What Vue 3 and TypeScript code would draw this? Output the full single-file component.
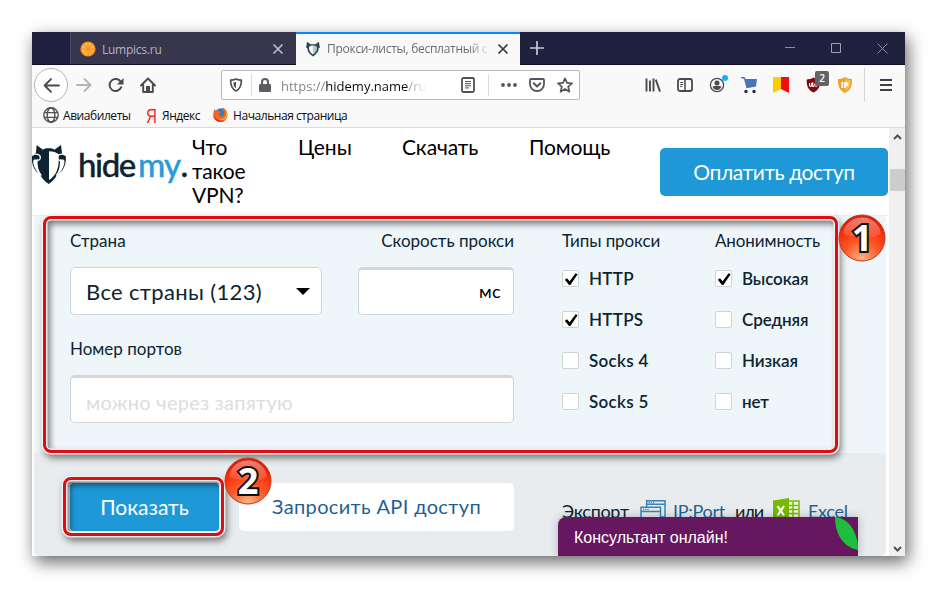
<script setup lang="ts">
interface Option { label: string; checked: boolean }
interface Group { title: string; kind: string; options: Option[] }

const groups: Group[] = [
  {
    title: 'Типы прокси',
    kind: 'types',
    options: [
      { label: 'HTTP', checked: true },
      { label: 'HTTPS', checked: true },
      { label: 'Socks 4', checked: false },
      { label: 'Socks 5', checked: false },
    ],
  },
  {
    title: 'Анонимность',
    kind: 'anon',
    options: [
      { label: 'Высокая', checked: true },
      { label: 'Средняя', checked: false },
      { label: 'Низкая', checked: false },
      { label: 'нет', checked: false },
    ],
  },
]
</script>

<template>
  <div class="stage">
    <div class="window">
      <div class="tabbar">
        <div class="tab idle">
          <svg class="fav" viewBox="0 0 16 16">
            <circle cx="8" cy="8" r="7.6" fill="#f7931e" />
            <circle cx="8" cy="8" r="6.1" fill="#ffb74d" />
            <path d="M8 2v12M2 8h12M3.8 3.8l8.4 8.4M12.2 3.8l-8.4 8.4" stroke="#f58a12" stroke-width="1" />
          </svg>
          <span class="tab-title">Lumpics.ru</span>
          <svg class="x" viewBox="0 0 12 12"><path d="M1.5 1.5l9 9M10.5 1.5l-9 9" stroke="#bcbcc8" stroke-width="1.7" /></svg>
        </div>
        <div class="tab active">
          <svg class="fav" viewBox="0 0 16 16">
            <path d="M2 .8l3.500 2.400h5L14 .8l.4 3.400.6 2-1.300 1c-.1 3.400-2.200 6.200-5.700 8.200C4.500 13.400 2.400 10.600 2.300 7.200L1 6.200l.6-2z" fill="#2b454f" />
            <path d="M4 6c1-1.200 2.400-1.600 4-1.600v9.200C5 11.700 3.800 9 4 6z" fill="#f7fafb" />
            <path d="M12 6c-1-1.200-2.400-1.600-4-1.600v9.200c3-1.900 4.200-4.600 4-7.600z" fill="#b4c6cf" />
          </svg>
          <span class="tab-title fade">Прокси-листы, бесплатный с</span>
          <svg class="x" viewBox="0 0 12 12"><path d="M1.5 1.5l9 9M10.5 1.5l-9 9" stroke="#38383d" stroke-width="1.7" /></svg>
        </div>
        <svg class="plus" viewBox="0 0 14 14"><path d="M7 0v14M0 7h14" stroke="#c9c9d4" stroke-width="1.7" /></svg>
        <div class="winbtns">
          <svg viewBox="0 0 11 11"><path d="M0 4.500h10" stroke="#8d8da0" /></svg>
          <svg viewBox="0 0 11 11"><path d="M.5.5h9v9h-9z" fill="none" stroke="#a0a0b2" /></svg>
          <svg viewBox="0 0 11 11"><path d="M.5.5l10 10M10.5.5l-10 10" stroke="#9a9aac" stroke-width=".9" /></svg>
        </div>
      </div>

      <div class="toolbar">
        <div class="back">
          <svg viewBox="0 0 16 16"><path d="M15 8H1.500M7.500 2L1.500 8l6 6" fill="none" stroke="#4a4a4f" stroke-width="1.800" stroke-linecap="round" stroke-linejoin="round" /></svg>
        </div>
        <div class="cell"><svg viewBox="0 0 16 16"><path d="M1 8h13.500M8.500 2l6 6-6 6" fill="none" stroke="#b5b5b7" stroke-width="1.900" stroke-linecap="round" stroke-linejoin="round" /></svg></div>
        <div class="cell"><svg viewBox="0 0 16 16"><path d="M13.200 10.200A6 6 0 1 1 12.800 5" fill="none" stroke="#4a4a4f" stroke-width="2" stroke-linecap="round" /><path d="M15.500 1v6.500H9z" fill="#4a4a4f" /></svg></div>
        <div class="cell"><svg viewBox="0 0 16 16"><path d="M1 8.500L8 1.500l7 7M3.200 7.500V15h9.600V7.500" fill="none" stroke="#4a4a4f" stroke-width="1.900" stroke-linecap="round" stroke-linejoin="round" /><path d="M6 14.500V9h4v5.500z" fill="#4a4a4f" /></svg></div>

        <div class="urlbar">
          <svg class="u-shield" viewBox="0 0 14 14"><path d="M7 1c2 .9 3.700 1.100 5.400 1.100 0 5.500-.9 8.900-5.400 10.900C2.500 11 1.600 7.600 1.600 2.100 3.300 2.100 5 1.900 7 1z" fill="none" stroke="#4f4f54" stroke-width="1.700" stroke-linejoin="round" /><path d="M7 3.800v6.500C5 9 4.500 7.200 4.400 4.500 5.400 4.400 6.200 4.200 7 3.800z" fill="#4f4f54" /></svg>
          <i class="u-sep"></i>
          <svg class="u-lock" viewBox="0 0 12 14"><rect y="6" width="12" height="8" rx="1.200" fill="#5c5c61" /><path d="M3 7V4a3 3 0 0 1 6 0v3" fill="none" stroke="#5c5c61" stroke-width="2" /></svg>
          <span class="url">https://<b>hidemy.name</b>/ru</span>
          <svg class="u-reader" viewBox="0 0 14 16"><rect x="1" y="1" width="12" height="14" rx="1.500" fill="none" stroke="#4f4f54" stroke-width="1.800" /><path d="M4 4.600h6M4 6.700h6M4 8.800h6M4 10.900h4" stroke="#4f4f54" /></svg>
          <i class="u-sep u-sep2"></i>
          <svg class="u-dots" viewBox="0 0 16 4"><circle cx="2" cy="2" r="1.900" /><circle cx="8" cy="2" r="1.900" /><circle cx="14" cy="2" r="1.900" /></svg>
          <svg class="u-pocket" viewBox="0 0 16 14"><path d="M2 1h12a1 1 0 0 1 1 1v4.300a7 6.700 0 0 1-14 0V2a1 1 0 0 1 1-1z" fill="none" stroke="#55555a" stroke-width="1.800" /><path d="M4.700 5.300L8 8.400l3.300-3.100" fill="none" stroke="#55555a" stroke-width="2" stroke-linecap="round" stroke-linejoin="round" /></svg>
          <svg class="u-star" viewBox="0 0 16 16"><path d="M8 1.300l2 4.600 5 .5-3.800 3.300 1.200 5L8 12l-4.400 2.700 1.200-5L1 6.400l5-.5z" fill="none" stroke="#55555a" stroke-width="1.700" stroke-linejoin="round" /></svg>
        </div>

        <div class="cell first"><svg viewBox="0 0 16 16"><path d="M1.500 1.500v13M5 3.500v11M8.500 1.500v13" stroke="#4a4a4f" stroke-width="1.900" /><path d="M10.800 2.600l4.200 12" stroke="#4a4a4f" stroke-width="1.900" /></svg></div>
        <div class="cell"><svg viewBox="0 0 16 16"><rect x="1" y="2" width="14" height="12" rx="2" fill="none" stroke="#4a4a4f" stroke-width="1.800" /><path d="M8 2v12" stroke="#4a4a4f" stroke-width="1.500" /><path d="M3.200 5.500h3M3.200 7.500h3M3.200 9.500h2" stroke="#4a4a4f" /></svg></div>
        <div class="cell"><svg viewBox="0 0 16 16"><circle cx="8" cy="8" r="6.600" fill="none" stroke="#4a4a4f" stroke-width="1.300" /><circle cx="8" cy="5.900" r="2.500" fill="#4a4a4f" /><path d="M3.600 10c.9-1.500 2.600-1 4.400-1s3.500-.5 4.400 1C11.500 12 10 13 8 13s-3.500-1-4.400-3z" fill="#4a4a4f" /></svg><i class="dot"></i></div>
        <div class="cell"><svg class="cart" viewBox="0 0 17 18"><path d="M0 1h3.500l1 2H16l-1 7.500-9.500 1.700L3 3 0 2z" fill="#4a73bd" /><circle cx="5" cy="15.500" r="1.700" fill="#2d2d30" /><circle cx="13" cy="15.500" r="1.700" fill="#2d2d30" /></svg></div>
        <div class="cell"><svg viewBox="0 0 16 16"><path d="M0 0h8v12L0 16z" fill="#fc0" /><path d="M8 0h8v16l-8-4z" fill="#f20d0d" /></svg></div>
        <div class="cell"><svg class="ub" viewBox="0 0 16 16"><path d="M8 0c2.500 1.700 5 2 7.200 2 .3 6.500-1 11-7.200 14C1.800 13 .5 8.500.8 2 3 2 5.500 1.700 8 0z" fill="#800610" /><path d="M3.800 5.800v2.700c0 1.200 2.200 1.200 2.200 0V5.800M7.200 5v4.500h1.600" fill="none" stroke="#fff" stroke-width="1.200" /><circle cx="10.800" cy="7.800" r="1.500" fill="none" stroke="#fff" stroke-width="1.200" /></svg><span class="count">2</span></div>
        <div class="cell"><svg viewBox="0 0 16 16"><path d="M8 0c2.300 1.500 4.600 2 7 2 .3 6.500-1 11-7 14C2 13 .7 8.500 1 2c2.400 0 4.700-.5 7-2z" fill="#f0a030" /><path d="M8 1.500c2 1.200 3.800 1.600 5.700 1.700 0 5-1.200 8.700-5.700 11.100z" fill="#f7b94c" /><text x="8" y="11" text-anchor="middle" class="ip">IP</text></svg></div>
        <i class="t-sep"></i>
        <div class="cell"><svg class="menu" viewBox="0 0 12 12"><path d="M0 1h12M0 6h12M0 11h12" stroke="#3f3f44" stroke-width="1.800" /></svg></div>
      </div>

      <div class="bookmarks">
        <svg class="globe" viewBox="0 0 16 16"><circle cx="8" cy="8" r="7.200" /><ellipse cx="8" cy="8" rx="3.800" ry="7.200" /><path d="M1 5.600h14M1 10.400h14" /></svg>
        <span class="bm b1">Авиабилеты</span>
        <span class="ya">Я</span>
        <span class="bm b2">Яндекс</span>
        <svg class="ff" viewBox="0 0 16 16">
          <circle cx="8.300" cy="7.300" r="6" fill="#2a7fd0" />
          <path d="M1.500 2.500c.7 1 1.500 1.200 2.700 1.200C6 3.700 7 5 8.300 5.500 7.500 7 6 6.500 6.300 8.300c.5 2.200 3.700 2.200 5 .7 1-1.200.8-3 .2-4.200C10.500 3.300 9.800 2 10 .6c3.500 1.500 6 4.700 5.500 8.900C15 13 12 15.800 8 15.800S.3 12.500.3 8.400c0-2.300.5-4.400 1.200-5.900z" fill="#f4661b" />
          <path d="M13 3c1.600 2.400 1.800 6-.5 8.200-2 1.900-5 2-7 .7 2 3 7.800 2.500 9.300-1.700.8-2.700.1-5.300-1.800-7.200z" fill="#ffbc23" />
          <path d="M.3 8.400C.5 12.500 4 15.800 8 15.800c2 0 3.600-.6 5-1.800-4.500 1.800-10.500-.5-12.700-5.600z" fill="#d6263d" />
        </svg>
        <span class="bm b3">Начальная страница</span>
      </div>

      <div class="viewport">
        <div class="page">
          <header class="header">
            <svg class="cat" viewBox="0 0 102 120">
              <path d="M14 3l19 14c4-3 8-4 17-4s13 1 17 4L87 3l3 24 8 12-14 5c1 34-8 58-34 76C24 102 15 78 17 44L2 39l10-14z" fill="#0c2432" />
              <path d="M51 22c13 0 22 3 29 9v19c0 26-10 46-29 58z" fill="#fff" />
              <path d="M2 31c18-3 26 4 22 14-4 7-12 4-14 2 2 20 8 35 18 48M99 31c-18-3-26 4-22 14 4 7 12 4 14 2-2 20-8 35-18 48" fill="none" stroke="#fff" stroke-width="4" />
              <path d="M0 36c12-4 20 2 17 8-4 5-9 0-12 4-5 8 3 27 14 40C5 78-3 56 0 36zM101 36c-12-4-20 2-17 8 4 5 9 0 12 4 5 8-3 27-14 40C96 78 104 56 101 36z" fill="#0c2432" />
            </svg>
            <div class="logo">hide<span>my</span><em>.</em></div>
            <nav class="nav">
              <a class="n1">Что<br />такое<br />VPN?</a>
              <a class="n2">Цены</a>
              <a class="n3">Скачать</a>
              <a class="n4">Помощь</a>
            </nav>
            <div class="pay">Оплатить доступ</div>
          </header>

          <section class="form">
            <div class="fields">
              <div>
                <div class="label">Страна</div>
                <div class="box select">Все страны (123)<i class="caret"></i></div>
              </div>
              <div>
                <div class="label right">Скорость прокси</div>
                <div class="box sunk speed">мс</div>
              </div>
              <div class="wide">
                <div class="label ports">Номер портов</div>
                <div class="box sunk hint">можно через запятую</div>
              </div>
            </div>
            <div v-for="g in groups" :key="g.kind" class="group" :class="g.kind">
              <div class="label">{{ g.title }}</div>
              <div v-for="o in g.options" :key="o.label" class="opt">
                <span class="check">
                  <svg v-if="o.checked" viewBox="0 0 14 14"><path d="M.8 7.800l2.200-1.600 2.600 3L11.600 1.300l2 1L6.400 13H5z" fill="#000" /></svg>
                </span>
                <span class="opt-label">{{ o.label }}</span>
              </div>
            </div>
          </section>

          <section class="actions">
            <div class="show">Показать</div>
            <div class="api">Запросить API доступ</div>
            <div class="export">
              <span class="e-text">Экспорт</span>
              <svg class="wins" viewBox="0 0 26 24"><path d="M6.700 7V.8H25V17h-4M6.700 4.200H25" /><path d="M1 7.200h19.500V23H1zM1 11.500h19.500" /><path d="M8.500 2.500h6M3 9.400h6" stroke-dasharray="1.200 1" /></svg>
              <a class="e-ip">IP:Port</a>
              <span class="e-or">или</span>
              <svg class="xls" viewBox="0 0 27 25"><path d="M15 3h11v19H15" fill="#f2f7e6" stroke="#76b900" stroke-width="1.500" /><path d="M16 7.500h9M16 11.500h9M16 15.500h9M20 4v17" stroke="#76b900" stroke-width="1.500" /><path d="M0 2.500L16 0v25L0 22z" fill="#76b900" /><path d="M4.500 8l6.500 9.500M11 8l-6.500 9.500" stroke="#fff" stroke-width="2.200" /></svg>
              <a class="e-x">Excel</a>
            </div>
          </section>
        </div>

        <div class="scroll">
          <svg viewBox="0 0 9 6"><path d="M1 5l3.500-3.500L8 5" /></svg>
          <div class="thumb"></div>
          <svg class="down" viewBox="0 0 9 6"><path d="M1 1l3.500 3.500L8 1" /></svg>
        </div>

        <div class="frame f-form"></div>
        <div class="frame f-btn"></div>
        <div class="chat">Консультант онлайн!
          <svg viewBox="0 0 23 33"><path d="M0 0c13 1 23 14 23 33C8 30 0 17 0 0z" fill="#1dbf3c" /></svg>
        </div>
      </div>

      <div v-for="n in 2" :key="n" class="badge" :class="'m' + n">
        <svg viewBox="0 0 48 48">
          <defs>
            <radialGradient :id="'ball' + n" cx=".5" cy=".95" r=".85">
              <stop offset="0" stop-color="#ffb284" />
              <stop offset=".45" stop-color="#fb5a28" />
              <stop offset=".8" stop-color="#fa2f08" />
              <stop offset="1" stop-color="#e01f08" />
            </radialGradient>
            <linearGradient :id="'gloss' + n" x1="0" y1="0" x2="0" y2="1">
              <stop offset="0" stop-color="#fff" stop-opacity=".45" />
              <stop offset="1" stop-color="#fff" stop-opacity=".1" />
            </linearGradient>
          </defs>
          <circle cx="24" cy="24" r="23" :fill="`url(#ball${n})`" stroke="#b8381c" stroke-width="1" />
          <path d="M5 19C7 9 15 3.500 24 3.500S41 9 43 19c-4 4.500-11 5-19 4S8 22.500 5 19z" :fill="`url(#gloss${n})`" />
        </svg>
        <span class="num">{{ n }}</span>
      </div>
    </div>
  </div>
</template>

<style>
body { background: #fff; overflow: hidden; }
</style>

<style scoped>
* { box-sizing: border-box; }
svg { display: block; flex: none; }
.stage { width: 937px; height: 599px; padding: 32px; overflow: hidden; font-family: Lato, "Open Sans", sans-serif; }
.window { position: relative; width: 873px; height: 524px; display: flex; flex-direction: column; background: #f9f9fa; box-shadow: 3px 6px 16px rgba(0, 0, 0, .6); white-space: nowrap; }

.tabbar { height: 33px; flex: none; display: flex; align-items: center; background: #20213f; border-bottom: 1px solid #0f0f22; padding-left: 38px; }
.tab { height: 32px; display: flex; align-items: center; font: 12px "Open Sans", sans-serif; }
.idle { width: 226px; background: #38364f; color: #b4b4c0; padding: 2px 12px 0 9px; border-left: 1px solid #4b4a64; letter-spacing: -.25px; }
.active { width: 224px; height: 33px; margin-bottom: -1px; background: #f9f9fa; border-top: 2px solid #0a84ff; color: #6a6a70; padding: 0 11px 2px 9px; letter-spacing: -.28px; }
.fav { width: 16px; height: 16px; margin-right: 6px; }
.tab-title { flex: 1; overflow: hidden; }
.fade { flex: none; width: 165px; margin-right: 5px; mask-image: linear-gradient(90deg, #000 86%, transparent 99%); }
.x { width: 12px; height: 12px; }
.plus { width: 14px; height: 14px; margin-left: 10px; }
.winbtns { margin-left: auto; display: flex; gap: 35px; padding-right: 17px; }
.winbtns svg { width: 11px; height: 11px; }

.toolbar { height: 40px; flex: none; display: flex; align-items: center; padding-left: 2px; }
.back { width: 34px; height: 34px; flex: none; display: flex; align-items: center; justify-content: center; border: 1px solid #b5b5b8; border-radius: 50%; background: #fff; }
.back svg { width: 17px; height: 17px; }
.cell { position: relative; width: 32px; height: 32px; flex: none; display: flex; align-items: center; justify-content: center; }
.cell svg { width: 16px; height: 16px; }
.cell .cart { width: 17px; height: 18px; }
.cell .ub { width: 15px; }
.cell .menu { width: 12px; height: 12px; }
.first { margin-left: 57px; }
.dot { position: absolute; left: 21px; top: 6px; width: 6px; height: 6px; border-radius: 50%; background: #0fb0f5; }
.count { position: absolute; left: 18px; top: 2px; width: 14px; height: 15px; border-radius: 2px; background: #636366; color: #fff; font: 600 10px/15px "Open Sans", sans-serif; text-align: center; }
.ip { font: 800 8px "Open Sans", sans-serif; fill: #fff; }
.t-sep { width: 1px; height: 34px; background: #d7d7da; margin: 0 5px 0 3px; }
.urlbar { width: 359px; height: 30px; flex: none; margin-left: 57px; border: 1px solid #b9b9bc; border-radius: 2px; background: #fff; display: flex; align-items: center; padding-left: 7px; }
.u-shield { width: 14px; height: 14px; }
.u-sep { width: 1px; height: 22px; margin: 0 7px 0 8px; background: #dcdcde; }
.u-lock { width: 12px; height: 14px; margin-right: 10px; }
.url { width: 150px; padding-top: 1px; color: #85858a; font: 13px/20px "Open Sans", sans-serif; mask-image: linear-gradient(90deg, #000 124px, transparent 146px); }
.url b { color: #0c0c0d; font-weight: 400; letter-spacing: 0; }
.u-reader { width: 14px; height: 16px; margin-left: 30px; }
.u-sep2 { margin: 0 12px 0 13px; }
.u-dots { width: 16px; height: 4px; fill: #55555a; margin-right: 12px; }
.u-pocket { width: 16px; height: 14px; margin-right: 12px; }
.u-star { width: 16px; height: 16px; }

.bookmarks { height: 23px; flex: none; display: flex; align-items: center; padding: 0 0 1px 11px; border-bottom: 1px solid #dcdcde; }
.globe { width: 16px; height: 16px; margin: -2px 4px 0 0; fill: none; stroke: #4f4f54; stroke-width: 1.4; }
.bm { font: 12px/18px "Open Sans", sans-serif; color: #0c0c0d; letter-spacing: -.44px; }
.b1 { width: 83px; }
.ya { width: 16px; font: 20px/18px "Liberation Sans", sans-serif; color: #f0271b; transform: scaleX(.75); transform-origin: 0 50%; }
.b2 { width: 51px; }
.ff { width: 15px; height: 15px; margin: -2px 5px 0 0; }

.viewport { position: relative; flex: 1; min-height: 0; display: flex; overflow: hidden; background: #fff; }
.page { width: 857px; flex: none; display: flex; flex-direction: column; }
.header { height: 88px; flex: none; display: flex; align-items: flex-start; border-bottom: 1px solid #e4edf1; color: #000; }
.cat { width: 34px; height: 40px; margin-top: 16px; }
.logo { width: 116px; margin: 14px 0 0 12px; font-size: 33px; line-height: 44px; letter-spacing: -1.4px; color: #0c2432; font-weight: 500; -webkit-text-stroke: .35px currentColor; }
.logo span { color: #2a9ad8; margin-left: 3px; letter-spacing: -.7px; }
.logo em { font-style: normal; }
.nav { display: flex; width: 466px; margin-left: -2px; padding-top: 7px; font-size: 21px; line-height: 24px; }
.n1 { width: 106px; letter-spacing: -.2px; }
.n2 { width: 104px; }
.n3 { width: 127px; letter-spacing: -.1px; }
.n4 { letter-spacing: -.15px; }
.pay { width: 228px; height: 48px; flex: none; margin: 20px 0 0 2px; border-radius: 5px; background: #1e98d7; color: #fff; font-size: 21px; line-height: 47px; letter-spacing: -.42px; text-align: center; }

.form { height: 237px; flex: none; margin: 0 3px 0 2px; padding: 15px 0 0 36px; display: flex; background: #eef6fa; color: #0c2432; }
.fields { width: 444px; flex: none; display: grid; grid-template-columns: 252px 156px; column-gap: 36px; align-content: start; }
.wide { grid-column: 1 / 3; margin-top: 24px; }
.label { height: 20px; font-size: 17px; line-height: 20px; }
.right { text-align: right; }
.box { position: relative; height: 48px; margin-top: 16px; border: 1px solid #cfd6d9; border-radius: 5px; background: #fff; line-height: 48px; }
.sunk { border-top: 3px solid #d3d8da; line-height: 42px; }
.select { display: flex; justify-content: space-between; align-items: center; padding: 1px 11px 0 15px; font-size: 22px; letter-spacing: .35px; }
.caret { border: 7px solid transparent; border-top: 7px solid #000; border-bottom: 0; }
.speed { padding-right: 12px; text-align: right; font-size: 18px; letter-spacing: .3px; color: #000; }
.hint { padding: 3px 0 0 15px; font-size: 20px; letter-spacing: .3px; color: #dbdddd; }
.group { margin-left: 48px; }
.types { width: 105px; letter-spacing: -.1px; }
.anon { letter-spacing: -.1px; }
.opt { display: flex; align-items: center; height: 41px; font-size: 17px; font-weight: 600; }
.label + .opt { margin-top: 7px; }
.check { width: 17px; height: 17px; margin-right: 10px; display: flex; align-items: center; justify-content: center; border: 1px solid #ced3d6; border-radius: 2px; background: #fff; }
.check svg { width: 14px; height: 14px; }
.types .opt-label { letter-spacing: .3px; }

.actions { flex: 1; margin: 0 3px 0 2px; padding: 30px 0 0 36px; display: flex; align-items: flex-start; background: #e8ecee; border-radius: 0 0 5px 5px; color: #0c2432; }
.show { width: 149px; height: 48px; border-radius: 4px; background: #1e98d7; color: #fff; font-size: 21px; line-height: 47px; text-align: center; }
.api { width: 275px; height: 48px; margin-left: 20px; border-radius: 5px; background: #fff; color: #1f5f94; font-size: 20px; line-height: 47px; letter-spacing: .35px; text-align: center; }
.export { display: flex; align-items: flex-start; margin-left: 48px; padding-top: 16px; font-size: 18px; line-height: 24px; letter-spacing: -.3px; }
.e-text { width: 78px; }
.wins { width: 26px; height: 24px; margin-top: 1px; fill: none; stroke: #3b83b5; stroke-width: 1.5; }
.e-ip { width: 62px; margin-left: 7px; color: #1f6496; }
.e-or { width: 38px; letter-spacing: -1.1px; }
.xls { width: 27px; height: 25px; margin-top: -1px; }
.e-x { margin-left: 8px; color: #1f6496; }

.scroll { width: 16px; flex: none; display: flex; flex-direction: column; align-items: center; background: #f0f0f0; padding-top: 6px; }
.scroll svg { width: 9px; height: 6px; fill: none; stroke: #505050; stroke-width: 2; }
.thumb { width: 15px; height: 22px; margin-top: 29px; background: #cdcdcd; }
.scroll .down { margin: auto 0 4px; }

/* Red annotation frames drawn over the page */
.frame { position: absolute; border: 3px solid #dc0d15; border-radius: 8px; box-shadow: 0 0 0 1.5px #f6efeb, 2px 4px 7px 1px rgba(0, 0, 0, .5), inset 0 0 0 1.5px #f6efeb, inset 3px 4px 6px 1px rgba(0, 0, 0, .5); }
.f-form { left: 11px; top: 88px; width: 795px; height: 237px; }
.f-btn { left: 31px; top: 349px; width: 161px; height: 59px; }
.chat { position: absolute; left: 526px; top: 389px; width: 300px; height: 39px; padding-left: 16px; border-radius: 8px 0 0 0; background: #66175f; color: #fff; font: 16px/41px "Liberation Sans", Arial, sans-serif; box-shadow: 0 0 10px rgba(0, 0, 0, .25); }
.chat svg { position: absolute; right: 0; top: 0; width: 23px; height: 33px; }
.badge { position: absolute; width: 48px; height: 48px; }
.badge svg { width: 48px; height: 48px; }
.m1 { left: 806px; top: 182px; }
.m2 { left: 192px; top: 425px; }
.num { position: absolute; inset: 0; font: 700 36px/47px "Open Sans", sans-serif; color: #fff; text-align: center; -webkit-text-stroke: 4px #111; paint-order: stroke fill; }
</style>
